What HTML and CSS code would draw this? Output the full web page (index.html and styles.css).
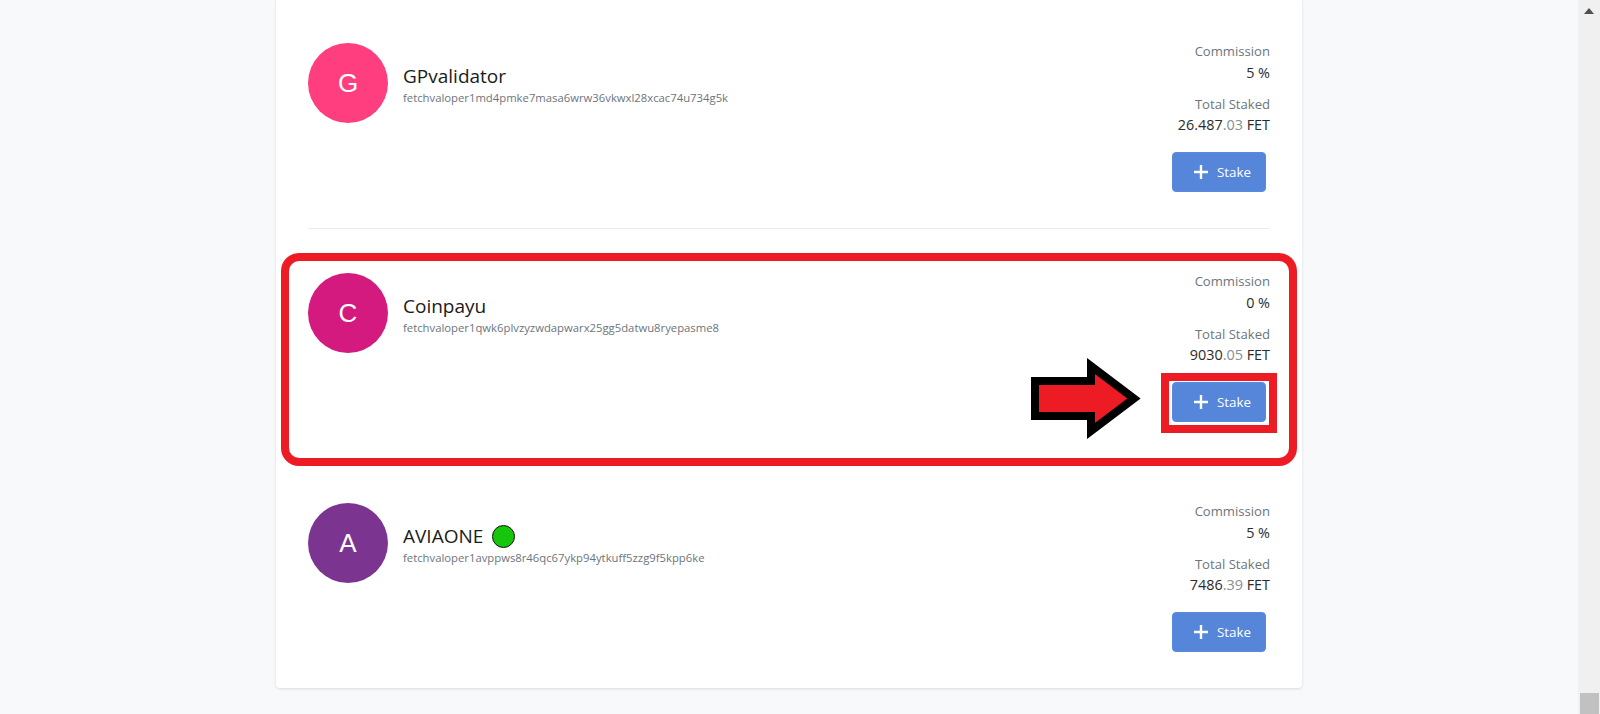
FILE: index.html
```html
<!DOCTYPE html>
<html lang="en">
<head>
    <meta charset="UTF-8">
    <meta name="viewport" content="width=device-width, initial-scale=1.0">
    <title>Validators</title>
    <link rel="stylesheet" href="styles.css">
</head>
<body>
    <div class="screen">
        <main class="page">
            <section class="card">

                <div class="validator">
                    <div class="identity">
                        <div class="avatar avatar-pink">G</div>
                        <div class="names">
                            <div class="name">GPvalidator</div>
                            <div class="address">fetchvaloper1md4pmke7masa6wrw36vkwxl28xcac74u734g5k</div>
                        </div>
                    </div>
                    <div class="stats">
                        <div class="label">Commission</div>
                        <div class="value">5 %</div>
                        <div class="label label-gap">Total Staked</div>
                        <div class="value">26.487<span class="decimals">.03</span> FET</div>
                        <button class="stake-btn" type="button">
                            <svg width="14" height="14" viewBox="0 0 14 14"><path d="M7 0v14M0 7h14" stroke="#fff" stroke-width="2.4"/></svg>
                            Stake
                        </button>
                    </div>
                </div>

                <div class="validator">
                    <div class="identity">
                        <div class="avatar avatar-magenta">C</div>
                        <div class="names">
                            <div class="name">Coinpayu</div>
                            <div class="address">fetchvaloper1qwk6plvzyzwdapwarx25gg5datwu8ryepasme8</div>
                        </div>
                    </div>
                    <div class="stats">
                        <div class="label">Commission</div>
                        <div class="value">0 %</div>
                        <div class="label label-gap">Total Staked</div>
                        <div class="value">9030<span class="decimals">.05</span> FET</div>
                        <button class="stake-btn" type="button">
                            <svg width="14" height="14" viewBox="0 0 14 14"><path d="M7 0v14M0 7h14" stroke="#fff" stroke-width="2.4"/></svg>
                            Stake
                        </button>
                    </div>

                    <!-- annotation drawn over the row -->
                    <div class="mark-row"></div>
                    <div class="mark-button"></div>
                    <svg class="mark-arrow" width="112" height="81" viewBox="0 0 112 81">
                        <polygon points="5,23 61,23 61,8 104,40.5 61,73 61,58 5,58" fill="#ed1c24" stroke="#000" stroke-width="8" stroke-linejoin="miter"/>
                    </svg>
                </div>

                <div class="validator">
                    <div class="identity">
                        <div class="avatar avatar-purple">A</div>
                        <div class="names">
                            <div class="name">AVIAONE <span class="online-dot"></span></div>
                            <div class="address">fetchvaloper1avppws8r46qc67ykp94ytkuff5zzg9f5kpp6ke</div>
                        </div>
                    </div>
                    <div class="stats">
                        <div class="label">Commission</div>
                        <div class="value">5 %</div>
                        <div class="label label-gap">Total Staked</div>
                        <div class="value">7486<span class="decimals">.39</span> FET</div>
                        <button class="stake-btn" type="button">
                            <svg width="14" height="14" viewBox="0 0 14 14"><path d="M7 0v14M0 7h14" stroke="#fff" stroke-width="2.4"/></svg>
                            Stake
                        </button>
                    </div>
                </div>

            </section>
        </main>

        <div class="scrollbar">
            <div class="scroll-up"></div>
            <div class="scroll-thumb"></div>
        </div>
    </div>
</body>
</html>
```

FILE: styles.css
```css
html, body {
    margin: 0;
    height: 714px;
    overflow: hidden;
}
body {
    font-family: "Open Sans", "Noto Sans", sans-serif;
    background-color: #f8f9fa;
    color: #212529;
}
.screen {
    display: flex;
    height: 714px;
}
.page {
    flex: 1;
}
.card {
    width: 1026px;
    margin: -1px auto 0;
    padding: 0 32px;
    box-sizing: border-box;
    background-color: #fff;
    border-radius: 0 0 4px 4px;
    box-shadow: 0 1px 3px rgba(0, 0, 0, 0.12);
}
.validator {
    position: relative;
    display: flex;
    justify-content: space-between;
    align-items: flex-start;
    padding: 44px 0 36px;
}
.validator + .validator {
    border-top: 1px solid #e9ecef;
}

/* left side */
.identity {
    display: flex;
    align-items: center;
    gap: 15px;
}
.avatar {
    width: 80px;
    height: 80px;
    border-radius: 50%;
    display: flex;
    align-items: center;
    justify-content: center;
    color: #fff;
    font-family: "Liberation Sans", Arial, sans-serif;
    font-size: 26px;
}
.avatar-pink {
    background-color: #ff3e7f;
}
.avatar-magenta {
    background-color: #d4197f;
}
.avatar-purple {
    background-color: #7b3590;
}
.names {
    margin-top: 4px;
}
.name {
    display: flex;
    align-items: center;
    gap: 9px;
    font-size: 19px;
    line-height: 26px;
    color: #1b1b1b;
}
.online-dot {
    width: 21px;
    height: 21px;
    border-radius: 50%;
    border: 1px solid #111;
    background-color: #16c60c;
}
.address {
    font-size: 11.3px;
    line-height: 18px;
    color: #6c757d;
}

/* right side */
.stats {
    display: flex;
    flex-direction: column;
    align-items: flex-end;
    text-align: right;
}
.label {
    font-size: 13.1px;
    line-height: 18px;
    color: #6c757d;
}
.label:first-child {
    margin-top: -1px;
    margin-bottom: 1px;
}
.label-gap {
    margin-top: 11px;
}
.value {
    font-size: 14.4px;
    line-height: 23px;
    color: #2b2b2b;
}
.decimals {
    color: #868e96;
}
.stake-btn {
    display: flex;
    align-items: center;
    gap: 9px;
    width: 94px;
    height: 40px;
    margin: 16px 4px 0 0;
    padding: 0 0 0 21px;
    box-sizing: border-box;
    border: 1px solid #5a8ade;
    border-radius: 4px;
    background-color: #5586d9;
    color: #fff;
    font-family: inherit;
    font-size: 13.4px;
}
.stake-btn svg {
    display: block;
}

/* red annotation */
.mark-row,
.mark-button,
.mark-arrow {
    position: absolute;
    z-index: 2;
    pointer-events: none;
}
.mark-row {
    top: 24px;
    bottom: -8px;
    left: -27px;
    right: -27px;
    border: 8px solid #ed1c24;
    border-radius: 18px;
}
.mark-button {
    top: 144px;
    right: -7px;
    width: 116px;
    height: 60px;
    box-sizing: border-box;
    border: 8px solid #ed1c24;
}
.mark-arrow {
    top: 129px;
    right: 128px;
}

/* window scrollbar */
.scrollbar {
    width: 22px;
    background-color: #f0f0f0;
    display: flex;
    flex-direction: column;
    justify-content: space-between;
    align-items: center;
}
.scroll-up {
    margin-top: 8px;
    width: 0;
    height: 0;
    border-left: 5px solid transparent;
    border-right: 5px solid transparent;
    border-bottom: 6px solid #505050;
}
.scroll-thumb {
    width: 19px;
    height: 21px;
    margin-left: 1px;
    background-color: #c1c1c1;
}
```
